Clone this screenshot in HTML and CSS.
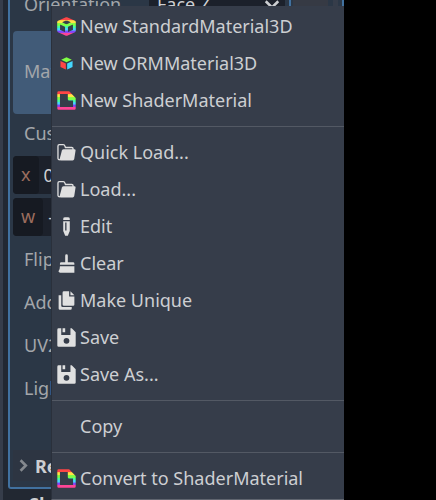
FILE: index.html
```
<!DOCTYPE html>
<html lang="en">
<head>
    <meta charset="UTF-8">
    <meta name="viewport" content="width=device-width, initial-scale=1.0">
    <title>Inspector</title>
    <link rel="stylesheet" href="styles.css">
</head>
<body>
    <!-- shared icons -->
    <svg class="defs" width="0" height="0" aria-hidden="true">
        <defs>
            <linearGradient id="rainbow" gradientUnits="userSpaceOnUse" x1="0" y1="1" x2="0" y2="15">
                <stop offset="0.14" stop-color="#ff4545"/>
                <stop offset="0.18" stop-color="#ffe345"/>
                <stop offset="0.3" stop-color="#ffe345"/>
                <stop offset="0.34" stop-color="#80ff45"/>
                <stop offset="0.44" stop-color="#80ff45"/>
                <stop offset="0.48" stop-color="#45ffa2"/>
                <stop offset="0.57" stop-color="#45ffa2"/>
                <stop offset="0.61" stop-color="#45d7ff"/>
                <stop offset="0.7" stop-color="#45d7ff"/>
                <stop offset="0.74" stop-color="#8045ff"/>
                <stop offset="0.82" stop-color="#8045ff"/>
                <stop offset="0.86" stop-color="#ff4596"/>
            </linearGradient>
            <symbol id="shader" viewBox="0 0 16 16">
                <path fill="url(#rainbow)" fill-rule="evenodd" d="M2 1h8l5 5v8q0 1-1 1H2q-1 0-1-1V2q0-1 1-1zM3 3v10h10V8h-3q-1 0-1-1V3z"/>
            </symbol>
            <symbol id="folder" viewBox="0 0 16 16">
                <path fill="none" stroke="#e0e0e0" d="M3 13.500Q1.500 13.500 1.500 12.500V3q0-1 1-1h3q1 0 1.300 1l.4 1.200H12q1 0 1 1V6"/>
                <path fill="#e0e0e0" d="M6 5.500h8q1 0 .9 1l-1 6.500q-.2 1-1.200 1H3.500q-.9 0-.7-1l1.700-6.500q.3-1 1.500-1z"/>
            </symbol>
            <symbol id="floppy" viewBox="0 0 16 16">
                <path fill="#e0e0e0" fill-rule="evenodd" d="M2 1h2v5h7V1h1l3 3v10q0 1-1 1H2q-1 0-1-1V2q0-1 1-1zM8 8.300a2.200 2.200 0 1 0 0 4.400 2.200 2.200 0 0 0 0-4.400zM5 1h2v3H5z"/>
            </symbol>
        </defs>
    </svg>

    <div class="editor">
        <div class="dock">
            <section class="inspector">
                <div class="row orientation">
                    <label for="orientation">Orientation</label>
                    <select id="orientation">
                        <option>Face Z</option>
                    </select>
                    <svg class="arrow" viewBox="0 0 16 16"><path d="M3 5l5 5 5-5"/></svg>
                    <span class="edge"></span>
                    <span class="bar"></span>
                    <span class="scroll"></span>
                </div>
                <div class="material">Mat</div>
                <div class="row custom">Cust</div>
                <div class="field">
                    <label for="aabb-x">x</label>
                    <input id="aabb-x" type="text" value="0">
                </div>
                <div class="field">
                    <label for="aabb-w">w</label>
                    <input id="aabb-w" type="text" value="-">
                </div>
                <div class="props">
                    <div class="row">Flip</div>
                    <div class="row">Add</div>
                    <div class="row">UV2</div>
                    <div class="row">Ligh</div>
                </div>
                <button class="group" type="button">
                    <svg viewBox="0 0 16 16"><path d="M5 4l4 4-4 4"/></svg>
                    Re
                </button>
            </section>
            <div class="next">Sk</div>

            <div class="menu" role="menu">
                <button type="button" role="menuitem">
                    <svg viewBox="0 0 16 16"><path fill="none" stroke="url(#rainbow)" stroke-width="2.200" stroke-linejoin="round" d="M8 2l6 2.700v6.600L8 14l-6-2.700V4.700zM2 4.700l6 2.900 6-2.900M8 7.600V14"/></svg>
                    New StandardMaterial3D
                </button>
                <button type="button" role="menuitem">
                    <svg viewBox="0 0 16 16">
                        <path fill="#80ff45" d="M8 3.200l4 1.900-4 1.900-4-1.900z"/>
                        <path fill="#ff4545" d="M3.400 6l4.100 2v4.600L3.400 10.600z"/>
                        <path fill="#45d7ff" d="M12.600 6L8.500 8v4.600l4.100-2z"/>
                    </svg>
                    New ORMMaterial3D
                </button>
                <button type="button" role="menuitem">
                    <svg viewBox="0 0 16 16"><use href="#shader"/></svg>
                    New ShaderMaterial
                </button>
                <hr>
                <button type="button" role="menuitem">
                    <svg viewBox="0 0 16 16"><use href="#folder"/></svg>
                    Quick Load...
                </button>
                <button type="button" role="menuitem">
                    <svg viewBox="0 0 16 16"><use href="#folder"/></svg>
                    Load...
                </button>
                <button type="button" role="menuitem">
                    <svg viewBox="0 0 16 16"><path fill="#e0e0e0" fill-rule="evenodd" d="M7 1h2q1.500 0 1.500 1v1h-5V2q0-1 1.500-1zM5.500 4h5v7.500L9 15H7l-1.500-3.500zM7 5v6h1V5z"/></svg>
                    Edit
                </button>
                <button type="button" role="menuitem">
                    <svg viewBox="0 0 16 16"><path fill="#e0e0e0" d="M8 1q1 0 1 1v5h4q1 0 1 1v1H3V8q0-1 1-1h3V2q0-1 1-1zM3 10h11v5H3q-1.600-.5-1-1.200Q3 12.500 3 10z"/></svg>
                    Clear
                </button>
                <button type="button" role="menuitem">
                    <svg viewBox="0 0 16 16"><path fill="#e0e0e0" d="M6 1h4v4h4v6q0 1-1 1H6q-1 0-1-1V2q0-1 1-1zM11 1l3 3h-3zM2 4h2v8q0 1 1 1h7v1q0 1-1 1H3q-1 0-1-1z"/></svg>
                    Make Unique
                </button>
                <button type="button" role="menuitem">
                    <svg viewBox="0 0 16 16"><use href="#floppy"/></svg>
                    Save
                </button>
                <button type="button" role="menuitem">
                    <svg viewBox="0 0 16 16"><use href="#floppy"/></svg>
                    Save As...
                </button>
                <hr>
                <button class="plain" type="button" role="menuitem">Copy</button>
                <hr>
                <button type="button" role="menuitem">
                    <svg viewBox="0 0 16 16"><use href="#shader"/></svg>
                    Convert to ShaderMaterial
                </button>
            </div>
        </div>
    </div>
</body>
</html>
```
FILE: styles.css
```
* {
    box-sizing: border-box;
}
body {
    margin: 0;
    background: #000;
    color: #a3a6aa;
    font-family: "Noto Sans", sans-serif;
    font-size: 18px;
    line-height: 26px;
    overflow: hidden;
}
button, input, select {
    font: inherit;
    color: inherit;
    border: none;
    margin: 0;
    padding: 0;
}
.defs {
    position: absolute;
}
.editor {
    padding-right: 92px;
    height: 100vh;
}
.dock {
    position: relative;
    height: 100%;
    background: #222832;
    border-left: 3px solid #363d4a;
    padding-left: 5px;
    overflow: hidden;
    white-space: nowrap;
}
.inspector {
    background: #2b3746;
    border: 2px solid #41719f;
    border-top: none;
    border-radius: 0 0 3px 3px;
    padding: 0 0 6px 3px;
}
.row {
    height: 43px;
    padding-left: 11px;
    display: flex;
    align-items: center;
}
.orientation {
    height: 31px;
    align-items: flex-start;
    margin-right: -2px;
}
.orientation label {
    width: 125px;
    margin-top: -9px;
}
.orientation select {
    flex: 1;
    height: 26px;
    margin-top: -9px;
    padding-left: 8px;
    appearance: none;
    background: #1c212b;
    color: #cdcfd2;
}
.arrow {
    width: 20px;
    margin: -5px 3px 0 -23px;
    fill: none;
    stroke: #cdcfd2;
    stroke-width: 2;
}
.edge {
    width: 2px;
    height: 26px;
    margin: 0 2px 0 4px;
    background: #41719f;
}
.bar {
    width: 35px;
    height: 26px;
    background: #363a44;
}
.scroll {
    width: 5px;
    height: 26px;
    margin: 0 6px 0 5px;
    background: #363d4a;
}
.material {
    height: 83px;
    padding-left: 11px;
    line-height: 80px;
    background: #415b78;
    border-radius: 4px;
}
.custom {
    height: 42px;
    padding-bottom: 4px;
}
.field {
    display: flex;
    height: 38px;
    margin-bottom: 4px;
    background: #1c212b;
    border-radius: 4px;
}
.field label {
    padding: 5px 8px;
    background: #161a22;
    color: #9b6d5e;
    border-radius: 4px;
}
.field input {
    flex: 1;
    min-width: 0;
    padding-left: 5px;
    background: none;
    color: #cdcfd2;
}
.props {
    height: 213px;
    margin-top: -3px;
}
.group {
    display: flex;
    align-items: center;
    width: 100%;
    height: 31px;
    background: #2d3542;
    color: #cdcfd2;
    font-weight: bold;
}
.group svg {
    width: 21px;
    margin: 0 0 0 1px;
    fill: none;
    stroke: #85898f;
    stroke-width: 2;
}
.next {
    padding: 2px 21px;
    color: #cdcfd2;
    font-weight: bold;
}
.menu {
    position: absolute;
    top: 6px;
    left: 48px;
    right: 0;
    padding: 2px 0;
    background: #363d4a;
    border-left: 1px solid #2a303b;
    border-bottom: 1px solid #60656f;
}
.menu button {
    display: flex;
    align-items: center;
    gap: 3px;
    width: 100%;
    height: 37px;
    padding: 0 4px 1px;
    background: none;
    color: #cdcfd2;
}
.menu svg {
    width: 21px;
    height: 21px;
    flex: none;
}
.menu .plain {
    padding-left: 28px;
}
.menu hr {
    height: 1px;
    margin: 7px 0;
    border: none;
    background: #535964;
}
```
